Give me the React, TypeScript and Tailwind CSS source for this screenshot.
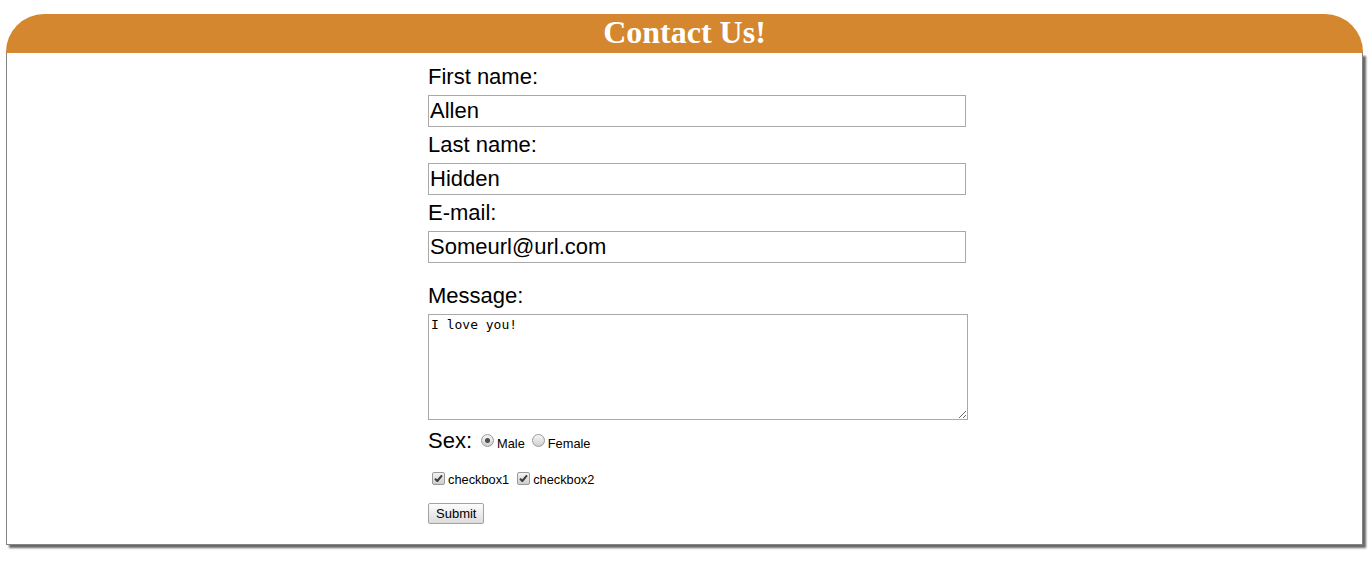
import React from 'react';

const textFields = [
  { id: 'first', label: 'First name:', value: 'Allen' },
  { id: 'last', label: 'Last name:', value: 'Hidden' },
  { id: 'email', label: 'E-mail:', value: 'Someurl@url.com' },
];

function Radio({ checked, label, name }: { checked?: boolean; label: string; name: string }) {
  return (
    <label className="flex items-center">
      <span className="relative w-[13px] h-[13px]">
        <input
          type="radio"
          name={name}
          defaultChecked={checked}
          className="appearance-none block w-[13px] h-[13px] rounded-full border border-[#9a9a9a] bg-linear-to-b from-[#f6f6f6] to-[#cfcfcf]"
        />
        {checked && (
          <span className="pointer-events-none absolute left-[4px] top-[4px] w-[5px] h-[5px] rounded-full bg-[#4d4d4d]" />
        )}
      </span>
      <span className="ml-[3px] text-[12.8px] mt-[7px]">{label}</span>
    </label>
  );
}

function Checkbox({ label }: { label: string }) {
  return (
    <label className="flex items-center">
      <span className="relative w-[13px] h-[13px]">
        <input
          type="checkbox"
          defaultChecked
          className="appearance-none block w-[13px] h-[13px] rounded-[2px] border border-[#9a9a9a] bg-linear-to-b from-[#f4f4f4] to-[#cdcdcd]"
        />
        <svg className="pointer-events-none absolute left-0 top-0" width="13" height="13" viewBox="0 0 13 13">
          <path d="M3 6.6 L5.3 9 L10 3.4" fill="none" stroke="#3c3c3c" strokeWidth="2" strokeLinejoin="round" />
        </svg>
      </span>
      <span className="ml-[3px] text-[12.8px] mt-[3px]">{label}</span>
    </label>
  );
}

export default function App() {
  return (
    <div className="bg-white min-h-screen pt-[14px] font-['Liberation_Sans',Arial,sans-serif] text-black">
      <div className="ml-[6px] mr-[8px]">
        {/* Header */}
        <div className="h-[39px] rounded-t-[38px] bg-[#d4872e] text-center">
          <h1 className="text-white font-bold text-[32px] leading-[37px] font-['Liberation_Serif','Times_New_Roman',serif]">
            Contact Us!
          </h1>
        </div>

        {/* Form body */}
        <div className="border-x border-b border-[#858585] shadow-[3px_3px_2px_rgba(0,0,0,0.6)] pt-[6px] pb-[20px] pl-[421px]">
          <form onSubmit={(e) => e.preventDefault()}>
            {textFields.map((field) => (
              <div key={field.id}>
                <label htmlFor={field.id} className="block mt-[5px] mb-[6px] text-[22px] leading-[25px]">
                  {field.label}
                </label>
                <input
                  id={field.id}
                  type="text"
                  defaultValue={field.value}
                  className="block w-[538px] h-[32px] px-[1px] pb-[2px] border border-[#a9a9a9] text-[22px] outline-none"
                />
              </div>
            ))}

            <label htmlFor="message" className="block mt-[20px] mb-[6px] text-[22px] leading-[25px]">
              Message:
            </label>
            <textarea
              id="message"
              defaultValue="I love you!"
              className="block w-[540px] h-[106px] p-[2px] border border-[#a9a9a9] text-[13px] leading-[15px] font-['DejaVu_Sans_Mono',monospace] outline-none"
            />

            {/* Sex */}
            <div className="flex items-center mt-[8px] h-[25px]">
              <span className="text-[22px] leading-[25px]">Sex:</span>
              <div className="ml-[9px] flex items-center gap-[7px] -mt-[1px]">
                <Radio name="sex" label="Male" checked />
                <Radio name="sex" label="Female" />
              </div>
            </div>

            {/* Checkboxes */}
            <div className="flex items-center gap-[8px] mt-[15px] h-[20px] pl-[4px]">
              <Checkbox label="checkbox1" />
              <Checkbox label="checkbox2" />
            </div>

            <button
              type="submit"
              className="block mt-[15px] h-[21px] px-[7px] text-[13px] border border-[#a3a3a3] rounded-[2px] bg-linear-to-b from-[#fdfdfd] to-[#dcdcdc]"
            >
              Submit
            </button>
          </form>
        </div>
      </div>
    </div>
  );
}
